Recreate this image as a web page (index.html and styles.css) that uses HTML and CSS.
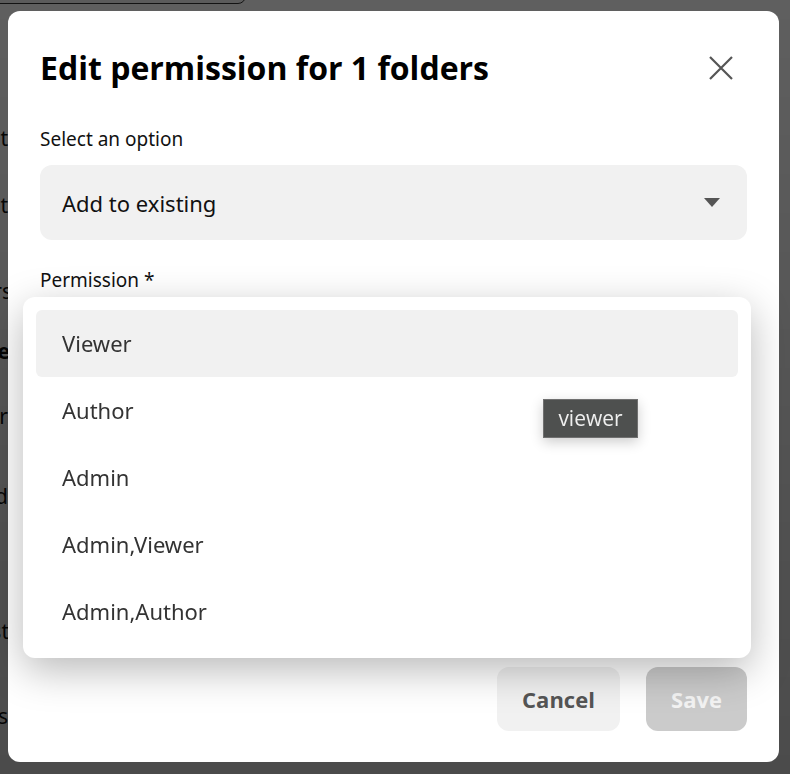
FILE: index.html
```html
<!DOCTYPE html>
<html lang="en">
<head>
  <meta charset="UTF-8" />
  <meta name="viewport" content="width=device-width, initial-scale=1.0" />
  <title>Edit permission</title>
  <link rel="stylesheet" href="styles.css">
</head>
<body>
  <div class="page">
    <div class="page-search"></div>
    <div class="page-lines">
      <p class="l1">Select</p>
      <p class="l2">Content</p>
      <p class="l3">Folders</p>
      <p class="l4 strong">Name</p>
      <p class="l5">Owner</p>
      <p class="l6">Shared</p>
      <p class="l7">Last</p>
      <p class="l8">Files</p>
    </div>
  </div>

  <div class="overlay">
    <div class="modal">
      <div class="modal-header">
        <h1>Edit permission for 1 folders</h1>
        <button class="close" aria-label="Close">
          <svg width="24" height="24" viewBox="0 0 24 24">
            <path d="M1 1 L23 23 M23 1 L1 23" stroke="#555" stroke-width="2.2" fill="none" />
          </svg>
        </button>
      </div>

      <div class="field">
        <label>Select an option</label>
        <div class="select">
          <span>Add to existing</span>
          <svg width="16" height="9" viewBox="0 0 16 9">
            <path d="M0 0 H16 L8 9 Z" fill="#555" />
          </svg>
        </div>
      </div>

      <div class="field permission">
        <label>Permission *</label>
        <div class="select"><span></span></div>
      </div>

      <div class="modal-footer">
        <button class="btn cancel">Cancel</button>
        <button class="btn save">Save</button>
      </div>

      <ul class="menu">
        <li class="active">Viewer</li>
        <li>Author</li>
        <li>Admin</li>
        <li>Admin,Viewer</li>
        <li>Admin,Author</li>
      </ul>

      <div class="tooltip">viewer</div>
    </div>
  </div>
</body>
</html>
```

FILE: styles.css
```css
body {
  margin: 0;
  font-family: 'Noto Sans', 'Open Sans', sans-serif;
  background: #fff;
  width: 790px;
  height: 774px;
  overflow: hidden;
}
.page {
  position: relative;
  height: 774px;
  color: #111;
}
.page-search {
  position: absolute;
  left: -20px;
  top: -40px;
  width: 264px;
  height: 42px;
  border: 1px solid #333;
  border-radius: 8px;
  background: #f4f4f4;
}
.page-lines p {
  position: absolute;
  margin: 0;
  font-size: 21px;
  line-height: 28px;
  text-align: right;
  right: 782px;
}
.page-lines .strong {
  font-weight: 700;
}
.page-lines .l1 { top: 124px; }
.page-lines .l2 { top: 191px; }
.page-lines .l3 { top: 277px; right: 778px; }
.page-lines .l4 { top: 337px; right: 780px; }
.page-lines .l5 { top: 402px; }
.page-lines .l6 { top: 482px; }
.page-lines .l7 { top: 617px; right: 781px; }
.page-lines .l8 { top: 702px; }
.overlay {
  position: fixed;
  inset: 0;
  background: linear-gradient(#000000a0, #000000b4);
  padding: 11px 11px 12px 8px;
  box-sizing: border-box;
}
.modal {
  position: relative;
  background: #fff;
  border-radius: 12px;
  height: 751px;
  width: 771px;
  box-sizing: border-box;
  padding: 37px 32px 31px;
  display: flex;
  flex-direction: column;
}
.modal-header {
  display: flex;
  justify-content: space-between;
  align-items: center;
  height: 40px;
}
.modal-header h1 {
  margin: 0;
  font-family: 'Open Sans', sans-serif;
  font-size: 32px;
  line-height: 40px;
  font-weight: 700;
  color: #000;
}
.close {
  background: none;
  border: none;
  padding: 0;
  margin-right: 14px;
  width: 24px;
  height: 24px;
  cursor: pointer;
}
.field {
  display: flex;
  flex-direction: column;
}
.field label {
  font-size: 19px;
  line-height: 24px;
  color: #111;
}
.field:nth-child(2) {
  margin-top: 39px;
}
.field.permission {
  margin-top: 28px;
}
.select {
  margin-top: 14px;
  height: 75px;
  border-radius: 12px;
  background: #f1f1f1;
  display: flex;
  align-items: center;
  justify-content: space-between;
  padding: 0 27px 0 22px;
  font-size: 22px;
  color: #111;
}
.modal-footer {
  margin-top: auto;
  display: flex;
  justify-content: flex-end;
  gap: 26px;
}
.btn {
  height: 64px;
  border: none;
  border-radius: 12px;
  font-family: 'Open Sans', sans-serif;
  font-size: 22px;
  font-weight: 700;
}
.cancel {
  width: 123px;
  background: #f1f1f1;
  color: #555;
}
.save {
  width: 101px;
  background: #cbcbcb;
  color: #f3f3f3;
}
.menu {
  position: absolute;
  left: 15px;
  top: 286px;
  width: 728px;
  margin: 0;
  padding: 13px;
  box-sizing: border-box;
  list-style: none;
  background: #fff;
  border-radius: 12px;
  box-shadow: 0 12px 40px rgba(0, 0, 0, 0.28);
}
.menu li {
  height: 67px;
  line-height: 67px;
  padding-left: 26px;
  font-size: 22px;
  color: #333;
  border-radius: 6px;
}
.menu li.active {
  background: #f1f1f1;
}
.tooltip {
  position: absolute;
  left: 535px;
  top: 388px;
  width: 95px;
  height: 39px;
  box-sizing: border-box;
  background: #4e504f;
  border: 1px solid #707070;
  color: #efefef;
  font-family: 'Open Sans', sans-serif;
  font-size: 21px;
  line-height: 37px;
  text-align: center;
  box-shadow: 0 4px 12px rgba(0, 0, 0, 0.2);
}
```
